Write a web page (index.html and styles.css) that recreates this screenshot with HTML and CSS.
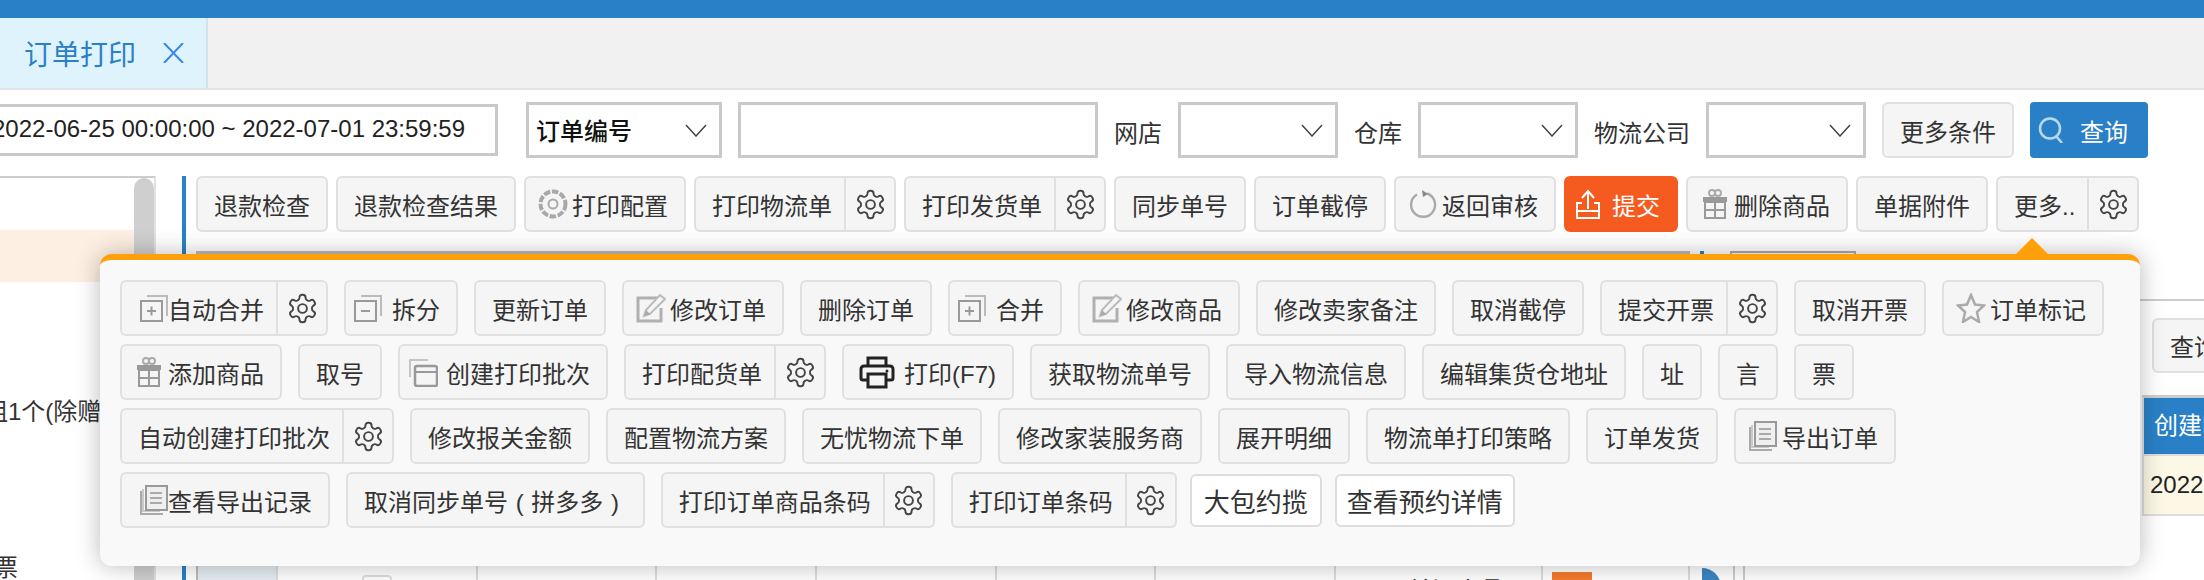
FILE: index.html
```html
<!DOCTYPE html>
<html lang="zh-CN">
<head>
  <meta charset="UTF-8" />
  <title>订单打印</title>
  <link rel="stylesheet" href="styles.css">
</head>
<body>

  <!-- ICON SPRITE -->
  <svg class="sprite" aria-hidden="true">
    <symbol id="i-gear" viewBox="0 0 24 24"><path d="M12.22 2h-.44a2 2 0 0 0-2 2v.18a2 2 0 0 1-1 1.73l-.43.25a2 2 0 0 1-2 0l-.15-.08a2 2 0 0 0-2.73.73l-.22.38a2 2 0 0 0 .73 2.73l.15.1a2 2 0 0 1 1 1.72v.51a2 2 0 0 1-1 1.74l-.15.09a2 2 0 0 0-.73 2.73l.22.38a2 2 0 0 0 2.73.73l.15-.08a2 2 0 0 1 2 0l.43.25a2 2 0 0 1 1 1.73V20a2 2 0 0 0 2 2h.44a2 2 0 0 0 2-2v-.18a2 2 0 0 1 1-1.73l.43-.25a2 2 0 0 1 2 0l.15.08a2 2 0 0 0 2.73-.73l.22-.39a2 2 0 0 0-.73-2.73l-.15-.08a2 2 0 0 1-1-1.74v-.5a2 2 0 0 1 1-1.74l.15-.09a2 2 0 0 0 .73-2.73l-.22-.38a2 2 0 0 0-2.73-.73l-.15.08a2 2 0 0 1-2 0l-.43-.25a2 2 0 0 1-1-1.73V4a2 2 0 0 0-2-2z" fill="none" stroke="#444" stroke-width="1.400"/><circle cx="12" cy="12" r="3.200" fill="none" stroke="#444" stroke-width="1.400"/></symbol>
    <symbol id="i-cog" viewBox="0 0 30 30"><circle cx="15" cy="15" r="12.500" fill="none" stroke="#a8a8a8" stroke-width="4" stroke-dasharray="6.500 1.700"/><circle cx="15" cy="15" r="4.500" fill="none" stroke="#aaa" stroke-width="2"/></symbol>
    <symbol id="i-merge" viewBox="0 0 28 28"><path d="M7 2H27V22" fill="none" stroke="#bbb" stroke-width="2"/><rect x="1" y="7" width="21" height="20" fill="#f5f5f5" stroke="#999" stroke-width="2"/><path d="M7 17H16M11.500 12.500V21.500" stroke="#999" stroke-width="2"/></symbol>
    <symbol id="i-split" viewBox="0 0 28 28"><path d="M7 2H27V22" fill="none" stroke="#bbb" stroke-width="2"/><rect x="1" y="7" width="21" height="20" fill="#f5f5f5" stroke="#999" stroke-width="2"/><path d="M7 17H16" stroke="#999" stroke-width="2"/></symbol>
    <symbol id="i-pen" viewBox="0 0 30 30"><path d="M23 5H2V28H25V15" fill="none" stroke="#b0b0b0" stroke-width="3"/><path d="M8 23L10 17L24 2L29 6L14 21Z" fill="#f5f5f5" stroke="#bbb" stroke-width="2"/><path d="M8 23L10 17L14 21Z" fill="#aaa"/></symbol>
    <symbol id="i-gift" viewBox="0 0 30 30"><circle cx="12" cy="4" r="3" fill="none" stroke="#aaa" stroke-width="2"/><circle cx="18" cy="4" r="3" fill="none" stroke="#aaa" stroke-width="2"/><rect x="3" y="8" width="24" height="5" fill="#999"/><rect x="5" y="13" width="20" height="16" fill="none" stroke="#999" stroke-width="2"/><path d="M15 8V29M5 21H25" stroke="#999" stroke-width="2"/></symbol>
    <symbol id="i-batch" viewBox="0 0 30 30"><path d="M2 20V3H20" fill="none" stroke="#c4c4c4" stroke-width="2"/><rect x="7" y="9" width="22" height="20" rx="2" fill="none" stroke="#999" stroke-width="2.500"/><path d="M7 15H29" stroke="#999" stroke-width="2"/></symbol>
    <symbol id="i-print" viewBox="0 0 36 34"><path d="M9 11V3H27V11" fill="none" stroke="#222" stroke-width="3"/><path d="M9 25H4A2 2 0 0 1 2 23V14A3 3 0 0 1 5 11H31A3 3 0 0 1 34 14V23A2 2 0 0 1 32 25H27" fill="none" stroke="#222" stroke-width="3"/><rect x="9" y="19" width="18" height="13" fill="none" stroke="#222" stroke-width="3"/><circle cx="28" cy="16" r="1.500" fill="#222"/></symbol>
    <symbol id="i-list" viewBox="0 0 28 30"><path d="M1 6V29H23" fill="none" stroke="#aaa" stroke-width="2"/><path d="M3 4V26H20" fill="none" stroke="#bbb" stroke-width="1.500"/><rect x="6" y="1" width="21" height="24" fill="#efefef" stroke="#999" stroke-width="2"/><path d="M10 8H22M10 13H22M10 18H22" stroke="#aaa" stroke-width="2"/></symbol>
    <symbol id="i-star" viewBox="0 0 30 30"><path d="M15 2L19 11.500L28 12.500L21 19L23 29L15 24L7 29L9 19L2 12.500L11 11.500Z" fill="none" stroke="#aaa" stroke-width="2.500"/></symbol>
    <symbol id="i-undo" viewBox="0 0 30 30"><path d="M9 5.500A12 12 0 1 0 19 4.500" fill="none" stroke="#aaa" stroke-width="2.500"/><path d="M14 1L20 5L15 8Z" fill="#888"/></symbol>
  </svg>

  <div class="page">

    <!-- TOP BAR + TABS -->
    <div class="topbar"></div>
    <div class="tabs">
      <div class="tab">
        <span>订单打印</span>
        <svg class="tab-close" viewBox="0 0 21 20"><path d="M1 0L20 20M20 0L1 20" stroke="#3a86e8" stroke-width="2" fill="none"/></svg>
      </div>
    </div>

    <!-- FILTERS -->
    <div class="filters">
      <div class="field field-date">2022-06-25 00:00:00 ~ 2022-07-01 23:59:59</div>
      <div class="field field-select field-type"><span>订单编号</span><svg class="chev" viewBox="0 0 22 13"><path d="M1 1L11 12L21 1" fill="none" stroke="#444" stroke-width="1.500"/></svg></div>
      <div class="field field-text"></div>
      <span class="filter-label">网店</span>
      <div class="field field-select"><svg class="chev" viewBox="0 0 22 13"><path d="M1 1L11 12L21 1" fill="none" stroke="#444" stroke-width="1.500"/></svg></div>
      <span class="filter-label">仓库</span>
      <div class="field field-select"><svg class="chev" viewBox="0 0 22 13"><path d="M1 1L11 12L21 1" fill="none" stroke="#444" stroke-width="1.500"/></svg></div>
      <span class="filter-label">物流公司</span>
      <div class="field field-select"><svg class="chev" viewBox="0 0 22 13"><path d="M1 1L11 12L21 1" fill="none" stroke="#444" stroke-width="1.500"/></svg></div>
      <a class="btn btn-more">更多条件</a>
      <a class="btn-query">
        <svg class="query-ico" viewBox="0 0 26 26"><circle cx="12" cy="11.500" r="10" fill="none" stroke="#b9d8ef" stroke-width="2.500"/><path d="M18 19L24 26" stroke="#b9d8ef" stroke-width="2.500"/></svg>
        <span>查询</span>
      </a>
    </div>

    <div class="main">

      <!-- SIDEBAR -->
      <aside class="side">
        <ul class="side-list">
          <li></li>
          <li class="is-active"></li>
          <li></li>
          <li></li>
          <li class="side-rule">组1个(除赠品)</li>
          <li></li>
          <li></li>
          <li class="side-ticket">发票</li>
        </ul>
        <div class="side-scroll"></div>
      </aside>

      <div class="content">

        <!-- TOOLBAR -->
        <div class="toolbar">
          <a class="btn">退款检查</a>
          <a class="btn">退款检查结果</a>
          <a class="btn"><svg class="ico"><use href="#i-cog"/></svg>打印配置</a>
          <div class="split"><a class="btn">打印物流单</a><a class="btn gear"><svg><use href="#i-gear"/></svg></a></div>
          <div class="split"><a class="btn">打印发货单</a><a class="btn gear"><svg><use href="#i-gear"/></svg></a></div>
          <a class="btn">同步单号</a>
          <a class="btn">订单截停</a>
          <a class="btn"><svg class="ico"><use href="#i-undo"/></svg>返回审核</a>
          <a class="btn btn-submit"><svg class="ico ico-wide" viewBox="0 0 28 30"><path d="M14 20V3M8 9L14 2L20 9" fill="none" stroke="#fff" stroke-width="2"/><path d="M8 14H3V29H25V14H20M3 22H25" fill="none" stroke="#fff" stroke-width="2"/></svg>提交</a>
          <a class="btn"><svg class="ico"><use href="#i-gift"/></svg>删除商品</a>
          <a class="btn">单据附件</a>
          <div class="split"><a class="btn">更多..</a><a class="btn gear"><svg><use href="#i-gear"/></svg></a></div>
        </div>

        <div class="work">
          <!-- ORDER GRID, MOSTLY UNDER THE MENU -->
          <div class="grid">
            <div class="grid-head"></div>
            <div class="grid-row">
              <div class="cell cell-pale"></div>
              <div class="cell"><span class="check"></span></div>
              <div class="cell"></div>
              <div class="cell"></div>
              <div class="cell"></div>
              <div class="cell"></div>
              <div class="cell"></div>
              <div class="cell cell-text">关证人品</div>
              <div class="cell"><span class="flag"></span></div>
            </div>
          </div>

          <div class="splitter">
            <div class="splitter-dash"></div>
            <div class="splitter-handle"></div>
          </div>

          <div class="pane">
            <div class="pane-box"></div>
            <div class="pane-rule"></div>
            <a class="btn pane-btn">查询</a>
            <div class="mini-table">
              <div class="mini-head">创建时间</div>
              <div class="mini-row">2022-06-25</div>
            </div>
            <div class="pane-foot"></div>
          </div>
        </div>
      </div>
    </div>

    <!-- MORE MENU -->
    <div class="menu">
      <div class="split"><a class="btn"><svg class="ico ico-tight"><use href="#i-merge"/></svg>自动合并</a><a class="btn gear"><svg><use href="#i-gear"/></svg></a></div>
      <a class="btn"><svg class="ico ico-wide"><use href="#i-split"/></svg>拆分</a>
      <a class="btn">更新订单</a>
      <a class="btn"><svg class="ico"><use href="#i-pen"/></svg>修改订单</a>
      <a class="btn">删除订单</a>
      <a class="btn"><svg class="ico ico-wide"><use href="#i-merge"/></svg>合并</a>
      <a class="btn"><svg class="ico"><use href="#i-pen"/></svg>修改商品</a>
      <a class="btn">修改卖家备注</a>
      <a class="btn">取消截停</a>
      <div class="split"><a class="btn">提交开票</a><a class="btn gear"><svg><use href="#i-gear"/></svg></a></div>
      <a class="btn">取消开票</a>
      <a class="btn"><svg class="ico"><use href="#i-star"/></svg>订单标记</a>

      <a class="btn"><svg class="ico"><use href="#i-gift"/></svg>添加商品</a>
      <a class="btn">取号</a>
      <a class="btn"><svg class="ico ico-batch"><use href="#i-batch"/></svg>创建打印批次</a>
      <div class="split"><a class="btn">打印配货单</a><a class="btn gear"><svg><use href="#i-gear"/></svg></a></div>
      <a class="btn btn-print"><svg class="ico-print"><use href="#i-print"/></svg>打印(F7)</a>
      <a class="btn">获取物流单号</a>
      <a class="btn">导入物流信息</a>
      <a class="btn">编辑集货仓地址</a>
      <a class="btn btn-one">址</a>
      <a class="btn btn-one">言</a>
      <a class="btn btn-one">票</a>

      <div class="split"><a class="btn">自动创建打印批次</a><a class="btn gear"><svg><use href="#i-gear"/></svg></a></div>
      <a class="btn">修改报关金额</a>
      <a class="btn">配置物流方案</a>
      <a class="btn">无忧物流下单</a>
      <a class="btn">修改家装服务商</a>
      <a class="btn">展开明细</a>
      <a class="btn">物流单打印策略</a>
      <a class="btn">订单发货</a>
      <a class="btn"><svg class="ico"><use href="#i-list"/></svg>导出订单</a>

      <a class="btn"><svg class="ico ico-tight"><use href="#i-list"/></svg>查看导出记录</a>
      <a class="btn btn-long">取消同步单号 ( 拼多多 ) </a>
      <div class="split"><a class="btn">打印订单商品条码</a><a class="btn gear"><svg><use href="#i-gear"/></svg></a></div>
      <div class="split"><a class="btn">打印订单条码</a><a class="btn gear"><svg><use href="#i-gear"/></svg></a></div>
      <a class="btn-plain">大包约揽</a>
      <a class="btn-plain btn-plain-long">查看预约详情</a>
    </div>

  </div>
</body>
</html>
```

FILE: styles.css
```css
/* Reset & basics */
*, *::before, *::after {
  box-sizing: border-box;
}
body, ul {
  margin: 0;
  padding: 0;
}
body {
  font-family: "Liberation Sans", "Noto Sans CJK SC", sans-serif;
  font-size: 24px;
  color: #333;
  background: #fff;
  overflow: hidden;
}
ul {
  list-style: none;
}
.sprite {
  display: none;
}
.page {
  position: relative;
  width: 2204px;
  height: 580px;
  overflow: hidden;
}

/* TOP BAR + TABS */
.topbar {
  height: 18px;
  background: #2a80c6;
}
.tabs {
  height: 72px;
  background: #f1f1f1;
  border-bottom: 2px solid #e4e4e4;
}
.tab {
  width: 208px;
  height: 70px;
  padding-left: 24px;
  display: flex;
  align-items: center;
  background: #dff3fd;
  border-right: 2px solid #d5e2e9;
  color: #2a80c6;
  font-size: 28px;
}
.tab-close {
  width: 21px;
  height: 20px;
  margin-left: 27px;
}

/* FILTERS */
.filters {
  height: 86px;
  padding: 12px 0 18px;
  display: flex;
  align-items: center;
  gap: 16px;
}
.field {
  height: 56px;
  background: #fff;
  border: 3px solid #c9c9c9;
  flex: none;
}
.field-date {
  width: 518px;
  height: 52px;
  margin-left: -20px;
  margin-right: 12px;
  padding-left: 9px;
  line-height: 43px;
  white-space: nowrap;
  overflow: hidden;
  color: #222;
}
.field-select {
  width: 160px;
  display: flex;
  align-items: center;
  justify-content: flex-end;
  padding-right: 12px;
}
.field-type {
  width: 196px;
  justify-content: space-between;
  padding-left: 7px;
  color: #111;
  font-weight: 500;
}
.field-type span {
  padding-bottom: 2px;
}
.field-text {
  width: 360px;
}
.chev {
  width: 22px;
  height: 13px;
}
.filter-label {
  padding-top: 2px;
  flex: none;
}

/* BUTTONS */
.btn {
  display: inline-flex;
  align-items: center;
  flex: none;
  height: 56px;
  padding: 0 16px;
  background: #f5f5f5;
  border: 2px solid #e0e0e0;
  border-radius: 6px;
  color: #333;
  white-space: pre;
}
.btn-more {
  width: 132px;
}
.btn-query {
  display: flex;
  align-items: center;
  flex: none;
  width: 118px;
  height: 56px;
  padding-left: 8px;
  background: #2a80c6;
  border-radius: 4px;
  color: #fff;
}
.query-ico {
  width: 26px;
  height: 26px;
  margin-right: 16px;
}
.btn-submit {
  background: #f55a1f;
  border-color: #f55a1f;
  color: #fff;
}
.btn-one {
  width: 60px;
  padding: 0;
  justify-content: center;
}
.btn-long {
  padding-right: 16px;
  word-spacing: 1px;
}
.btn-print {
  padding-left: 15px;
}
.btn-plain {
  display: inline-flex;
  align-items: center;
  flex: none;
  height: 53px;
  margin: 2px 0 0 -3px;
  padding: 0 12px;
  background: #fff;
  border: 2px solid #ddd;
  border-radius: 6px;
  color: #333;
  font-size: 26px;
}
.btn-plain-long {
  padding: 0 10px;
}
.ico {
  width: 30px;
  height: 30px;
  margin: 0 4px 0 -4px;
  flex: none;
}
.ico-wide {
  width: 28px;
  margin: 0 10px 0 -8px;
}
.ico-tight {
  width: 28px;
  margin: 0 0 0 2px;
}
.ico-batch {
  margin: 0 8px 0 -8px;
}
.ico-print {
  width: 36px;
  height: 34px;
  margin-right: 9px;
  flex: none;
}

/* button with a settings part glued on */
.split {
  display: inline-flex;
  flex: none;
}
.split .btn:first-child {
  padding-right: 12px;
  border-right: 0;
  border-radius: 6px 0 0 6px;
}
.split .gear {
  width: 52px;
  padding: 0;
  justify-content: center;
  border-radius: 0 6px 6px 0;
}
.gear svg {
  width: 33px;
  height: 33px;
  flex: none;
}

/* MAIN */
.main {
  display: flex;
  gap: 26px;
  height: 404px;
}

/* SIDEBAR */
.side {
  display: flex;
  width: 156px;
  height: 404px;
  flex: none;
  border-top: 2px solid #ccc;
  border-right: 2px solid #e2e2e2;
}
.side-list {
  width: 134px;
  overflow: hidden;
}
.side-list li {
  height: 52px;
  line-height: 52px;
  white-space: nowrap;
}
.side-list .is-active {
  background: #fdf0e2;
}
.side-rule {
  margin-left: -16px;
}
.side-ticket {
  margin-left: -30px;
}
.side-scroll {
  width: 20px;
  background: #cfcfcf;
  border-radius: 10px 10px 0 0;
}

/* CONTENT */
.content {
  flex: 1;
  min-width: 0;
  padding-left: 10px;
  border-left: 4px solid #2a80c6;
}
.toolbar {
  display: flex;
  gap: 8px;
}
.work {
  display: flex;
  margin-top: 19px;
}

/* ORDER GRID */
.grid {
  width: 1494px;
  flex: none;
  border-top: 3px solid #bbb;
}
.grid-head {
  height: 306px;
}
.grid-row {
  display: grid;
  grid-template-columns: 82px 200px 179px 160px 180px 159px 180px 207px 147px;
  height: 120px;
}
.cell {
  border-right: 2px solid #ddd;
}
.cell-pale {
  background: #e6edf2;
  border-left: 2px solid #bbb;
}
.cell-text {
  padding: 17px 0 0 72px;
  line-height: 28px;
}
.check {
  display: block;
  width: 30px;
  height: 30px;
  margin: 15px 0 0 84px;
  background: #fff;
  border: 2px solid #ddd;
  border-radius: 4px;
}
.flag {
  display: block;
  width: 40px;
  height: 40px;
  margin: 12px 0 0 9px;
  background: #f47a2d;
}

/* SPLITTER */
.splitter {
  width: 40px;
  flex: none;
  padding-left: 10px;
}
.splitter-dash {
  width: 4px;
  height: 3px;
  background: #2a80c6;
}
.splitter-handle {
  width: 19px;
  height: 40px;
  margin: 314px 0 0 2px;
  background: #3b86c4;
  border-radius: 0 19px 0 0;
}

/* RIGHT PANE */
.pane {
  width: 474px;
  flex: none;
}
.pane-box {
  width: 126px;
  height: 48px;
  border: 2px solid #aaa;
  border-bottom: 0;
}
.pane-rule {
  height: 2px;
  background: #ccc;
}
.pane-btn {
  width: 132px;
  height: 55px;
  margin: 17px 0 0 422px;
}
.mini-table {
  margin: 22px 0 0 412px;
  border-top: 3px solid #ccc;
  border-left: 2px solid #ddd;
  border-bottom: 2px solid #ddd;
  white-space: nowrap;
  overflow: hidden;
}
.mini-head {
  height: 56px;
  padding-left: 10px;
  line-height: 56px;
  background: #2a80c6;
  color: #fff;
}
.mini-row {
  height: 60px;
  padding-left: 6px;
  line-height: 58px;
  background: #fdf8e6;
  border-top: 2px solid #ddd;
  color: #222;
}
.pane-foot {
  width: 12px;
  height: 100px;
  margin-left: 3px;
  border-left: 2px solid #ccc;
  border-right: 2px solid #ccc;
}

/* MORE MENU */
.menu {
  position: absolute;
  left: 100px;
  top: 254px;
  width: 2040px;
  height: 312px;
  padding: 20px 24px 0 20px;
  display: flex;
  flex-wrap: wrap;
  align-content: flex-start;
  gap: 8px 16px;
  background: #f9f9f9;
  border-top: 6px solid #ff9f0a;
  border-radius: 12px;
  box-shadow: 0 0 24px rgba(0, 0, 0, 0.28);
}
.menu::before {
  content: "";
  position: absolute;
  left: 1916px;
  top: -22px;
  border-left: 16px solid transparent;
  border-right: 16px solid transparent;
  border-bottom: 16px solid #ff9f0a;
}
```
